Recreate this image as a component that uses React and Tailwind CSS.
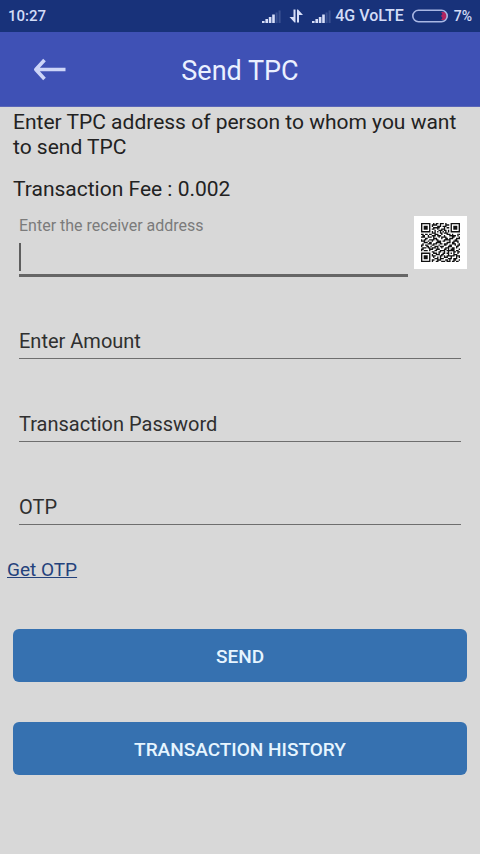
import { useState } from "react";

const QR_ROWS = [
  "11111110010110111010001111111",
  "10000010111100100011101000001",
  "10111010100011101110001011101",
  "10111010011111000101101011101",
  "10111010110010011100001011101",
  "10000010001001110110101000001",
  "11111110101010101010101111111",
  "00000000111000110111000000000",
  "11011011001110010001110100011",
  "01100100111011100100011111010",
  "11100111010001011110000110001",
  "00011000011100010011011100111",
  "10110011110110000111110001100",
  "11100100100011101100010011110",
  "00111011000111100001110110010",
  "01000111011100110111000111001",
  "11011000110001000110011001011",
  "10001101001110111000111000110",
  "01110110111010010011100110100",
  "11000011100111000110101110001",
  "10111010001100111101111110110",
  "00000000110001100100100011011",
  "11111110011101001101101010010",
  "10000010100111011000100011100",
  "10111010111000110101111110111",
  "10111010010010100111001000101",
  "10111010001110111000111011100",
  "10000010110011100011010011001",
  "11111110100110011101110110110",
];

const QrIcon = () => {
  const path = QR_ROWS.map((row, y) =>
    [...row].map((cell, x) => (cell === "1" ? `M${x} ${y}h1v1h-1z` : "")).join("")
  ).join("");
  return (
    <svg viewBox="0 0 29 29" className="w-full h-full" fill="#111" aria-hidden="true">
      <path d={path} />
    </svg>
  );
};

const SignalIcon = () => (
  <svg width="20" height="14" viewBox="0 0 20 14" aria-hidden="true">
    <g fill="#d6def8">
      <rect x="1" y="12" width="2.6" height="2" />
      <rect x="4.4" y="10" width="2.6" height="4" />
      <rect x="7.8" y="8" width="2.6" height="6" />
      <rect x="11.2" y="5.5" width="2.6" height="8.5" />
    </g>
    <g fill="#3a5292">
      <rect x="14.6" y="3.5" width="2" height="10.5" />
      <rect x="17.6" y="1.5" width="2" height="12.5" />
    </g>
  </svg>
);

const DataIcon = () => (
  <svg width="14" height="14" viewBox="0 0 14 14" fill="#d6def8" aria-hidden="true">
    <path d="M4.5 0.5h2v13h-1L0.5 8h4zM8 13.5h2V6h4L9 0.5H8z" />
  </svg>
);

const BatteryIcon = () => (
  <svg width="36" height="14" viewBox="0 0 36 14" aria-hidden="true">
    <path d="M29 3h2.5a4 4 0 0 1 0 8H29l1.5-2-1.5-2 1.5-2z" fill="#b3245f" />
    <rect x="0.8" y="1.3" width="34.4" height="11.4" rx="5.7" fill="none" stroke="#a9b7e4" strokeWidth="1.6" />
  </svg>
);

const StatusBar = () => (
  <div className="flex items-center justify-between h-8 px-2 bg-[#18327a] text-[#d3dcf7] font-medium">
    <span className="text-[15px]">10:27</span>
    <div className="flex items-center gap-2">
      <div className="flex items-center gap-2">
        <SignalIcon />
        <DataIcon />
        <SignalIcon />
      </div>
      <span className="-ml-1 text-base">4G VoLTE</span>
      <div className="flex items-center gap-[6px]">
        <BatteryIcon />
        <span className="text-sm">7%</span>
      </div>
    </div>
  </div>
);

const Header = () => (
  <header className="relative flex items-center justify-center h-[75px] bg-[#3f51b5] border-b border-[#5a66b8]">
    <button type="button" aria-label="Back" className="absolute left-8 p-0">
      <svg width="36" height="24" viewBox="0 0 36 24" fill="none" stroke="#cdd5f8" strokeWidth="3.6" aria-hidden="true">
        <path d="M33.5 12.5H5M12.5 3L3.8 12.5l8.7 9.5" strokeLinejoin="round" />
      </svg>
    </button>
    <h1 className="pt-1 text-[27px] text-[#eaf0ff]">Send TPC</h1>
  </header>
);

const Field = ({ label, type = "text", value, onChange }) => (
  <input
    type={type}
    aria-label={label}
    placeholder={label}
    value={value}
    onChange={onChange}
    className="block w-full h-9 border-b border-[#6e6e6e] bg-transparent text-xl text-[#2f2f2f] placeholder:text-[#2f2f2f] outline-none"
  />
);

const ActionButton = ({ type = "button", children }) => (
  <button
    type={type}
    className="w-full h-[53px] pt-1 rounded-md bg-[#3671b0] text-[#e6f5ff] text-[19px] font-medium"
  >
    {children}
  </button>
);

const App = () => {
  const [address, setAddress] = useState("");
  const [amount, setAmount] = useState("");
  const [password, setPassword] = useState("");
  const [otp, setOtp] = useState("");

  return (
    <div className="min-h-screen bg-[#d8d8d8] font-[Roboto,sans-serif] text-[#222]">
      <StatusBar />
      <Header />

      <form onSubmit={(e) => e.preventDefault()}>
        <div className="px-[13px] pt-[3px]">
          <p className="text-[21px] leading-[25px]">
            Enter TPC address of person to whom you want to send TPC
          </p>
          <p className="mt-[17px] text-[21px] leading-[25px]">Transaction Fee : 0.002</p>

          <div className="flex items-start gap-[6px] mt-[14px] pl-[6px]">
            <div className="flex-1">
              <label htmlFor="address" className="block text-base leading-5 text-[#7b7b7b]">
                Enter the receiver address
              </label>
              <div className="relative">
                <input
                  id="address"
                  type="text"
                  value={address}
                  onChange={(e) => setAddress(e.target.value)}
                  className="block w-full h-[41px] border-b-[3px] border-[#666] bg-transparent text-xl outline-none"
                />
                {!address && <span className="absolute left-0 bottom-[6px] w-[2px] h-7 bg-[#5e5e5e]" />}
              </div>
            </div>
            <button type="button" aria-label="Scan QR code" className="w-[53px] h-[53px] p-[7px] bg-white">
              <QrIcon />
            </button>
          </div>
        </div>

        <div className="flex flex-col gap-[47px] mt-[46px] px-[19px]">
          <Field label="Enter Amount" value={amount} onChange={(e) => setAmount(e.target.value)} />
          <Field
            label="Transaction Password"
            type="password"
            value={password}
            onChange={(e) => setPassword(e.target.value)}
          />
          <Field label="OTP" value={otp} onChange={(e) => setOtp(e.target.value)} />
        </div>

        <a href="#otp" className="inline-block mt-[33px] ml-[7px] text-[19px] leading-6 text-[#24427c] underline">
          Get OTP
        </a>

        <div className="flex flex-col gap-10 mt-[46px] px-[13px]">
          <ActionButton type="submit">SEND</ActionButton>
          <ActionButton>TRANSACTION HISTORY</ActionButton>
        </div>
      </form>
    </div>
  );
};

export default App;
